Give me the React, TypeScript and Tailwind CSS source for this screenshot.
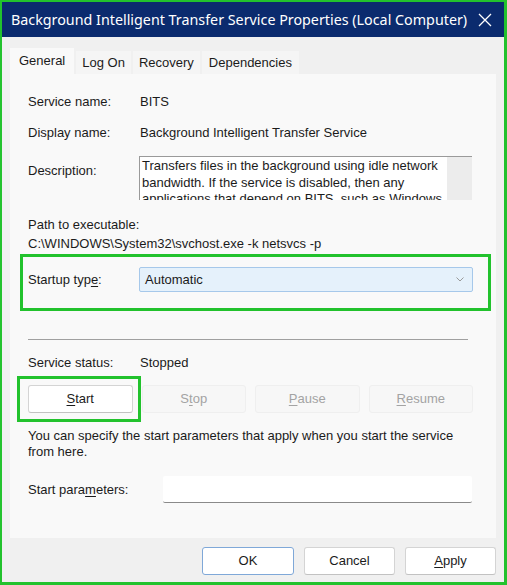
import React from "react";

const green = "border-[#22c22d]";

function U({ children }: { children: React.ReactNode }) {
  return <span className="underline underline-offset-[2px] decoration-[1px]">{children}</span>;
}

export default function App() {
  return (
    <div className={`w-[507px] h-[585px] border-[3px] border-t-2 border-l-2 ${green} bg-[#f0f0f0] flex flex-col font-['Liberation_Sans',Arial,sans-serif] text-[13px] text-[#1b1b1b] leading-[16px] overflow-hidden`}>
      {/* Title bar */}
      <div className="h-[35px] shrink-0 bg-[#0b2b6e] flex items-center justify-between pl-[9px] pr-[12px] text-white">
        <span className="font-['Noto_Sans',sans-serif] text-[14.3px] leading-[20px] whitespace-nowrap">
          Background Intelligent Transfer Service Properties (Local Computer)
        </span>
        <svg width="14" height="14" viewBox="0 0 14 14" className="shrink-0">
          <path d="M1 1 L13 13 M13 1 L1 13" stroke="white" strokeWidth="1.3" fill="none" />
        </svg>
      </div>

      {/* Body */}
      <div className="flex-1 flex flex-col px-[8px] pt-[11px]">
        {/* Tabs */}
        <div className="h-[26px] flex items-end gap-[2px]">
          <div className="h-[26px] px-[9px] bg-[#f9f9f9] flex items-center">General</div>
          <div className="h-[23px] px-[6px] bg-[#f5f5f5] flex items-center pt-[1px]">Log On</div>
          <div className="h-[23px] px-[6px] bg-[#f5f5f5] flex items-center pt-[1px]">Recovery</div>
          <div className="h-[23px] px-[7px] bg-[#f5f5f5] flex items-center pt-[1px]">Dependencies</div>
        </div>

        {/* Panel */}
        <div className="w-[486px] h-[464px] bg-[#f9f9f9] pl-[18px] flex flex-col">
          <div className="mt-[20px] h-[16px] flex">
            <div className="w-[111px]">Service name:</div>
            <div className="pl-[1px]">BITS</div>
          </div>
          <div className="mt-[15px] h-[16px] flex">
            <div className="w-[111px]">Display name:</div>
            <div className="pl-[1px]">Background Intelligent Transfer Service</div>
          </div>
          <div className="mt-[15px] h-[44px] flex">
            <div className="w-[111px] pt-[7px]">Description:</div>
            <div className="w-[333px] h-[44px] bg-white border-t border-l border-[#9a9a9a] flex overflow-hidden">
              <div className="flex-1 pl-[2px] pt-[1px] leading-[16.5px] whitespace-nowrap overflow-hidden">
                <div>Transfers files in the background using idle network</div>
                <div>bandwidth. If the service is disabled, then any</div>
                <div>applications that depend on BITS, such as Windows</div>
              </div>
              <div className="w-[25px] bg-[#ececec]" />
            </div>
          </div>
          <div className="mt-[17px] h-[16px]">Path to executable:</div>
          <div className="mt-[3px] h-[16px]">C:\WINDOWS\System32\svchost.exe -k netsvcs -p</div>

          {/* Startup type */}
          <div className="relative mt-[15px] h-[25px] w-[445px] flex items-center">
            <div className="w-[111px]">
              Startup typ<U>e</U>:
            </div>
            <div className="w-[334px] h-[25px] bg-[#e5f1fb] border border-[#a6c8ea] rounded-[2px] flex items-center justify-between pl-[5px] pr-[8px]">
              <span>Automatic</span>
              <svg width="8" height="5" viewBox="0 0 8 5">
                <path d="M0.5 0.5 L4 4 L7.5 0.5" stroke="#9a9a9a" strokeWidth="1" fill="none" />
              </svg>
            </div>
            <div className={`absolute -left-[8px] -right-[18px] -top-[13px] -bottom-[19px] border-[3px] ${green} pointer-events-none`} />
          </div>

          <div className="mt-[47px] h-px w-[440px] bg-[#a0a0a0]" />

          <div className="mt-[15px] h-[16px] flex">
            <div className="w-[111px]">Service status:</div>
            <div className="pl-[1px]">Stopped</div>
          </div>

          {/* Control buttons */}
          <div className="mt-[14px] h-[28px] w-[445px] grid grid-cols-4 gap-[9px]">
            <div className="relative">
              <div className="h-[28px] bg-white border border-[#d4d4d4] border-b-[#c2c2c2] rounded-[3px] flex items-center justify-center">
                <span><U>S</U>tart</span>
              </div>
              <div className={`absolute -left-[11px] -right-[8px] -top-[9px] -bottom-[9px] border-[3px] ${green} pointer-events-none`} />
            </div>
            <div className="h-[28px] bg-[#f7f7f7] border border-[#efefef] rounded-[3px] flex items-center justify-center text-[#a3a3a3]">
              <span>S<U>t</U>op</span>
            </div>
            <div className="h-[28px] bg-[#f7f7f7] border border-[#efefef] rounded-[3px] flex items-center justify-center text-[#a3a3a3]">
              <span><U>P</U>ause</span>
            </div>
            <div className="h-[28px] bg-[#f7f7f7] border border-[#efefef] rounded-[3px] flex items-center justify-center text-[#a3a3a3]">
              <span><U>R</U>esume</span>
            </div>
          </div>

          <div className="mt-[15px] leading-[16px] whitespace-nowrap">
            <div>You can specify the start parameters that apply when you start the service</div>
            <div>from here.</div>
          </div>

          <div className="mt-[16px] h-[27px] flex items-center">
            <div className="w-[135px]">
              Start para<U>m</U>eters:
            </div>
            <div className="w-[309px] h-[27px] bg-white border-b border-[#8a8a8a] rounded-[2px]" />
          </div>
        </div>

        {/* Footer */}
        <div className="mt-[9px] flex justify-end gap-[10px]">
          <div className="w-[92px] h-[28px] bg-white border border-[#7fa8d8] rounded-[3px] flex items-center justify-center">OK</div>
          <div className="w-[91px] h-[28px] bg-white border border-[#d4d4d4] border-b-[#c2c2c2] rounded-[3px] flex items-center justify-center">Cancel</div>
          <div className="w-[91px] h-[28px] bg-white border border-[#d4d4d4] border-b-[#c2c2c2] rounded-[3px] flex items-center justify-center">
            <span><U>A</U>pply</span>
          </div>
        </div>
      </div>
    </div>
  );
}
